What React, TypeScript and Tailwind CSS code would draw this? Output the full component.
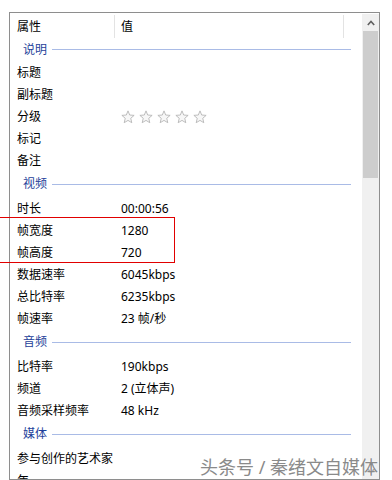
import React from 'react';

type Row = { label: string; value?: React.ReactNode };
type Group = { title: string; first?: boolean; rows: Row[] };

const Stars = () => (
  <div className="flex gap-[4px] items-center">
    {[0, 1, 2, 3, 4].map((i) => (
      <svg key={i} width="14" height="14" viewBox="0 0 24 24">
        <polygon
          points="12,1.5 14.9,8.6 22.5,9.2 16.7,14.2 18.5,21.8 12,17.8 5.5,21.8 7.3,14.2 1.5,9.2 9.1,8.6"
          fill="#f7f7f7"
          stroke="#b5b5b5"
          strokeWidth="1.5"
          strokeLinejoin="round"
        />
      </svg>
    ))}
  </div>
);

const groups: Group[] = [
  {
    title: '说明',
    first: true,
    rows: [
      { label: '标题' },
      { label: '副标题' },
      { label: '分级', value: <Stars /> },
      { label: '标记' },
      { label: '备注' },
    ],
  },
  {
    title: '视频',
    rows: [
      { label: '时长', value: '00:00:56' },
      { label: '帧宽度', value: '1280' },
      { label: '帧高度', value: '720' },
      { label: '数据速率', value: '6045kbps' },
      { label: '总比特率', value: '6235kbps' },
      { label: '帧速率', value: '23 帧/秒' },
    ],
  },
  {
    title: '音频',
    rows: [
      { label: '比特率', value: '190kbps' },
      { label: '频道', value: '2 (立体声)' },
      { label: '音频采样频率', value: '48 kHz' },
    ],
  },
  {
    title: '媒体',
    rows: [{ label: '参与创作的艺术家' }, { label: '年' }],
  },
];

export default function App() {
  return (
    <div
      className="relative w-[392px] h-[480px] bg-white overflow-hidden text-[12px] text-black"
      style={{ fontFamily: '"Noto Sans", "Noto Sans CJK SC", sans-serif' }}
    >
      <div className="ml-[9px] mt-[12px] w-[371px] h-[468px] border border-[#8e8e8e] flex overflow-hidden">
        <div className="w-[352px] shrink-0 overflow-hidden">
          <div className="flex h-[24px] items-center pt-[3px]">
            <div className="w-[104px] pl-[7px]">属性</div>
            <div className="w-px h-[23px] bg-[#e3e3e3]" />
            <div className="w-[228px] pl-[6px]">值</div>
            <div className="w-px h-[23px] bg-[#e3e3e3]" />
          </div>
          {groups.map((g) => (
            <div key={g.title}>
              <div className={`flex items-center pl-[13px] pr-[11px] pt-[2px] ${g.first ? 'h-[23px]' : 'h-[26px]'}`}>
                <span className="text-[#1e3f9a] leading-none">{g.title}</span>
                <div className="flex-1 h-px bg-[#a9bbe6] ml-[5px]" />
              </div>
              {g.rows.map((r) => (
                <div key={r.label} className="flex h-[22px] items-center pt-[3px]">
                  <div className="w-[111px] pl-[7px] whitespace-nowrap">{r.label}</div>
                  <div className="flex-1 whitespace-nowrap">{r.value}</div>
                </div>
              ))}
            </div>
          ))}
        </div>
        <div className="w-[17px] shrink-0 bg-[#f0f0f0] flex flex-col mt-px">
          <div className="h-[17px] flex items-center justify-center">
            <svg width="8" height="6" viewBox="0 0 8 6">
              <path d="M0.8 5 L4 1.5 L7.2 5" fill="none" stroke="#606060" strokeWidth="1.6" />
            </svg>
          </div>
          <div className="mx-px h-[147px] bg-[#cdcdcd]" />
          <div className="flex-1" />
          <div className="h-[17px] flex items-center justify-center">
            <svg width="8" height="6" viewBox="0 0 8 6">
              <path d="M0.8 1 L4 4.5 L7.2 1" fill="none" stroke="#606060" strokeWidth="1.6" />
            </svg>
          </div>
        </div>
      </div>

      <div className="absolute left-[-2px] top-[217px] w-[177px] h-[46px] border border-[#e10000]" />

      <div className="absolute left-[200px] top-[456px] text-[18px] leading-[22px] text-[#8a8a8a] whitespace-nowrap [text-shadow:0_0_2px_#ffffff,0_0_1px_#ffffff]">
        头条号 / 秦绪文自媒体
      </div>
    </div>
  );
}
